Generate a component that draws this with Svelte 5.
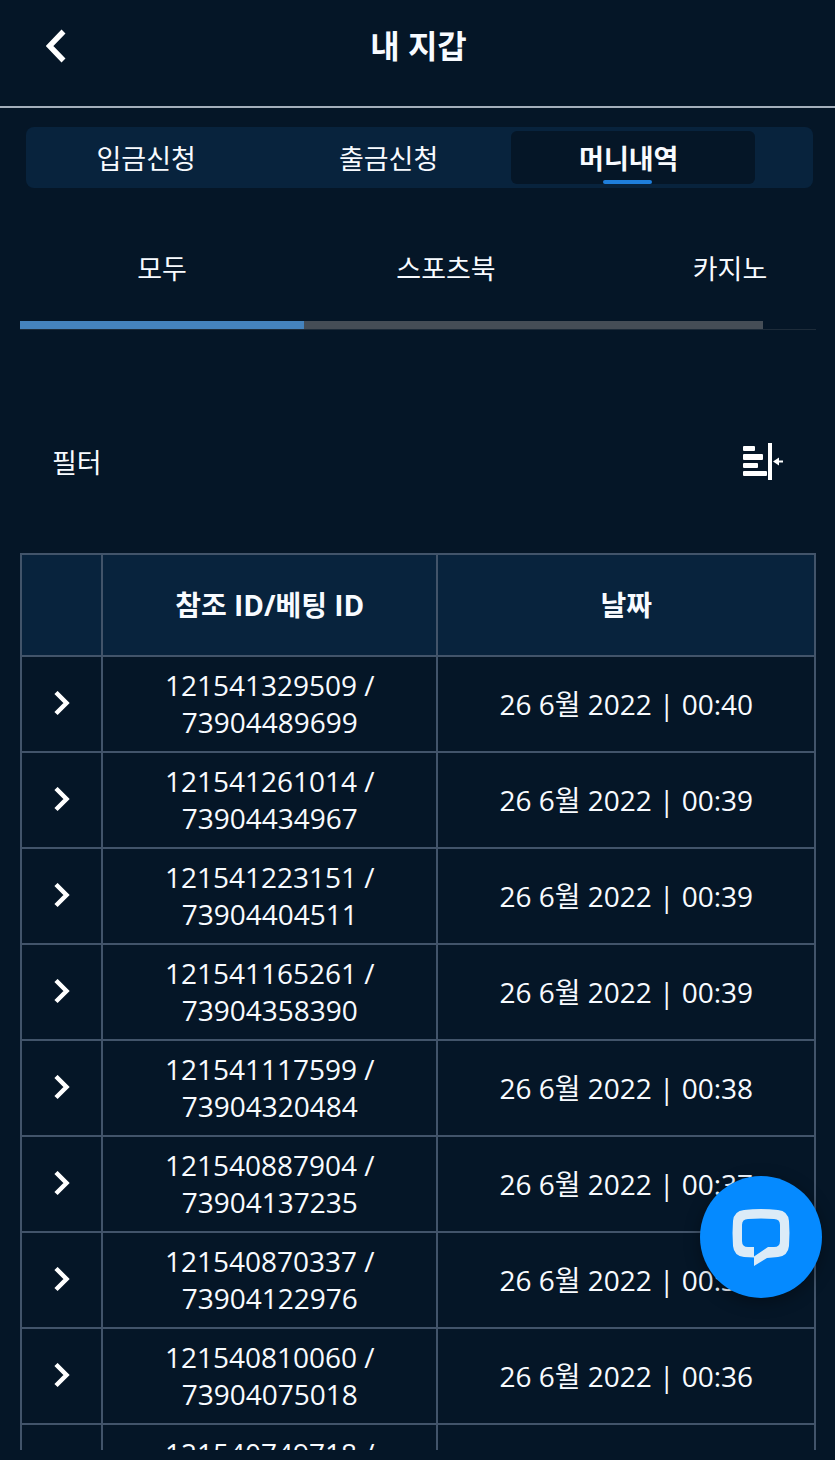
<script>
	let tabs = ['입금신청', '출금신청', '머니내역'];
	let activeTab = $state('머니내역');

	let categories = ['모두', '스포츠북', '카지노'];
	let activeCategory = $state('모두');

	let rows = [
		{ ref: '121541329509', bet: '73904489699', time: '00:40' },
		{ ref: '121541261014', bet: '73904434967', time: '00:39' },
		{ ref: '121541223151', bet: '73904404511', time: '00:39' },
		{ ref: '121541165261', bet: '73904358390', time: '00:39' },
		{ ref: '121541117599', bet: '73904320484', time: '00:38' },
		{ ref: '121540887904', bet: '73904137235', time: '00:37' },
		{ ref: '121540870337', bet: '73904122976', time: '00:37' },
		{ ref: '121540810060', bet: '73904075018', time: '00:36' },
		{ ref: '121540749718', bet: '73904027364', time: '00:36' }
	];
</script>

<div class="wallet">
	<header class="header">
		<button class="back" aria-label="뒤로">
			<svg width="20" height="34" viewBox="0 0 20 34">
				<path d="M17.5 2.5 L3.5 17 L17.5 31.5" fill="none" stroke="#fff" stroke-width="5.5" />
			</svg>
		</button>
		<h1>내 지갑</h1>
	</header>

	<main class="content">
		<nav class="tabs">
			{#each tabs as tab}
				<button class="tab" class:active={activeTab === tab} onclick={() => (activeTab = tab)}>{tab}</button>
			{/each}
		</nav>

		<section class="history">
			<div class="categories">
				{#each categories as category}
					<button
						class="category"
						class:selected={activeCategory === category}
						onclick={() => (activeCategory = category)}>{category}</button>
				{/each}
			</div>

			<div class="filter">
				<span>필터</span>
				<button class="filter-button" aria-label="필터">
					<svg width="42" height="38" viewBox="-1 -1 42 38" fill="#fff">
						<rect x="0" y="3" width="12" height="5" rx="1" />
						<rect x="0" y="11" width="20" height="6" rx="1" />
						<rect x="0" y="20" width="15" height="5" rx="1" />
						<rect x="0" y="28" width="24" height="5" rx="1" />
						<rect x="25" y="0" width="4" height="37" />
						<path d="M30 18.5 L36 14.5 V17.5 H40 V19.5 H36 V22.5 Z" />
					</svg>
				</button>
			</div>

			<table>
				<thead>
					<tr>
						<th class="toggle"></th>
						<th class="ids">참조 ID/베팅 ID</th>
						<th>날짜</th>
					</tr>
				</thead>
				<tbody>
					{#each rows as row}
						<tr>
							<td>
								<button class="expand" aria-label="펼치기">
									<svg width="16" height="26" viewBox="0 0 16 26">
										<path d="M2 1.5 L12.5 12 L2 22.5" fill="none" stroke="#fff" stroke-width="4.5" />
									</svg>
								</button>
							</td>
							<td>{row.ref} /<br />{row.bet}</td>
							<td>26 6월 2022 | {row.time}</td>
						</tr>
					{/each}
				</tbody>
			</table>
		</section>
	</main>

	<button class="chat" aria-label="채팅">
		<svg width="58" height="60" viewBox="0 -2 58 60">
			<path
				fill="#dcebf7"
				fill-rule="evenodd"
				d="M12 1 Q29 -1 46 1 Q56 2 57 12 Q58 24 57 37 Q56 47 46 48 L35 49 L22 57 V48.5 L12 48 Q2 47 1 37 Q0 24 1 12 Q2 2 12 1 Z M16 10 Q10 10 10 16 V32 Q10 38 16 38 H22 V47.5 L36 38 H42 Q48 38 48 32 V16 Q48 10 42 10 Q29 9 16 10 Z" />
		</svg>
	</button>
</div>

<style>
	:global(body) {
		margin: 0;
		background: #051627;
	}

	.wallet {
		box-sizing: border-box;
		height: 100vh;
		padding-bottom: 10px;
		display: flex;
		flex-direction: column;
		background: #051627;
		color: #f8fbff;
		font-family: "Open Sans", "Noto Sans CJK KR", sans-serif;
		font-size: 27px;
	}

	button {
		padding: 0;
		border: none;
		background: none;
		color: inherit;
		font: inherit;
		cursor: pointer;
	}

	svg {
		display: block;
	}

	.header {
		flex: none;
		display: grid;
		grid-template-columns: 66px 1fr 64px;
		align-items: center;
		height: 92px;
		padding-bottom: 14px;
		border-bottom: 2px solid #a4afbb;
	}

	.back {
		justify-self: end;
	}

	h1 {
		margin: 0;
		font-size: 32px;
		line-height: 44px;
		font-weight: 700;
		text-align: center;
	}

	.content {
		flex: 1;
		min-height: 0;
		overflow-y: auto;
		scrollbar-width: none;
	}

	.tabs {
		display: flex;
		margin: 19px 22px 0 26px;
		padding: 4px 0;
		border-radius: 8px;
		background: #08233d;
	}

	.tab {
		box-sizing: border-box;
		width: 30.8%;
		height: 53px;
		padding-right: 2px;
	}

	.tab.active {
		position: relative;
		width: 31%;
		padding-right: 8px;
		border-radius: 6px;
		background: #051627;
		font-weight: 700;
	}

	.tab.active::after {
		content: "";
		position: absolute;
		left: 38%;
		bottom: 0;
		width: 20%;
		height: 4px;
		border-radius: 2px;
		background: #1f7fdc;
	}

	.history {
		padding: 0 19px 0 20px;
	}

	.categories {
		display: flex;
		margin-top: 28px;
		overflow: hidden;
		border-bottom: 1px solid #1d2b39;
		/* track stops short of the right edge */
		background: linear-gradient(#454d56, #454d56) left bottom / 743px 8px no-repeat;
	}

	.category {
		flex: none;
		width: 284px;
		height: 113px;
		padding-bottom: 2px;
		border-bottom: 8px solid transparent;
	}

	.category.selected {
		border-bottom-color: #4583bd;
	}

	.filter {
		display: flex;
		align-items: center;
		justify-content: space-between;
		height: 96px;
		margin: 83px 32px 44px;
	}

	.filter-button {
		flex: none;
	}

	table {
		width: 100%;
		table-layout: fixed;
		border-collapse: collapse;
		font-size: 28px;
		line-height: 37px;
		text-align: center;
	}

	th,
	td {
		padding: 10px 0;
		border: 2px solid #42546a;
	}

	th {
		height: 80px;
		background: #08233d;
		font-weight: 700;
	}

	.toggle {
		width: 79px;
	}

	.ids {
		width: 42%;
	}

	.expand {
		display: block;
		margin: 0 auto;
	}

	.chat {
		position: fixed;
		right: 13px;
		bottom: 162px;
		display: flex;
		align-items: center;
		justify-content: center;
		width: 122px;
		height: 122px;
		border-radius: 50%;
		background: #058aff;
		box-shadow: 0 4px 16px rgba(0, 0, 0, 0.35);
	}
</style>
